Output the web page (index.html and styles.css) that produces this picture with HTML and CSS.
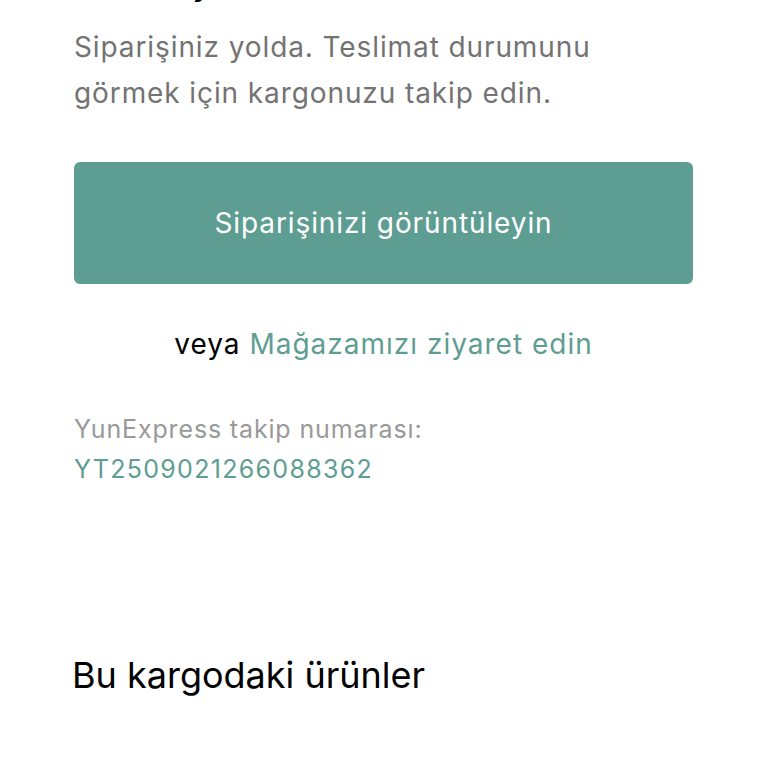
FILE: index.html
```html
<!DOCTYPE html>
<html lang="tr">
<head>
  <meta charset="UTF-8">
  <meta name="viewport" content="width=device-width, initial-scale=1.0">
  <title>Kargo durumu</title>
  <link rel="stylesheet" href="styles.css">
</head>
<body>
  <main class="page">
    <section class="status">
      <h1 class="status-title">Gönderi yolda</h1>
      <p class="status-text">
        Siparişiniz yolda. Teslimat durumunu<br>
        görmek için kargonuzu takip edin.
      </p>
      <a class="order-button" href="#">Siparişinizi görüntüleyin</a>
      <p class="alt-link">veya <a href="#">Mağazamızı ziyaret edin</a></p>
      <div class="tracking">
        <span class="tracking-label">YunExpress takip numarası:</span>
        <a class="tracking-number" href="#">YT2509021266088362</a>
      </div>
    </section>

    <section class="items">
      <h2>Bu kargodaki ürünler</h2>
    </section>
  </main>
</body>
</html>
```

FILE: styles.css
```css
body {
  margin: 0;
  background-color: #ffffff;
  font-family: Inter, "Noto Sans", sans-serif;
  color: #000;
}
a {
  color: #5e9d92;
  text-decoration: none;
}
.page {
  padding: 0 75px 0 74px;
}
.status-title {
  margin: -34px 0 0;
  font-size: 29px;
  line-height: 40px;
  font-weight: 600;
}
.status-text {
  margin: 18px 0 0;
  font-size: 28px;
  line-height: 46px;
  letter-spacing: 0.9px;
  color: #737373;
}
.order-button {
  display: flex;
  align-items: center;
  justify-content: center;
  height: 122px;
  margin-top: 46px;
  border-radius: 6px;
  background-color: #5e9d92;
  color: #ffffff;
  font-size: 28px;
  letter-spacing: 0.9px;
}
.alt-link {
  margin: 40px 0 0;
  text-align: center;
  font-size: 28px;
  line-height: 40px;
  letter-spacing: 1px;
}
.tracking {
  display: flex;
  flex-direction: column;
  margin-top: 45px;
  font-size: 25px;
  line-height: 40px;
  letter-spacing: 0.85px;
}
.tracking-label {
  color: #999999;
}
.tracking-number {
  letter-spacing: 1.3px;
}
.items {
  margin-top: 164px;
}
.items h2 {
  margin: 0 0 0 -2px;
  font-size: 36px;
  line-height: 44px;
  font-weight: 400;
}
```
